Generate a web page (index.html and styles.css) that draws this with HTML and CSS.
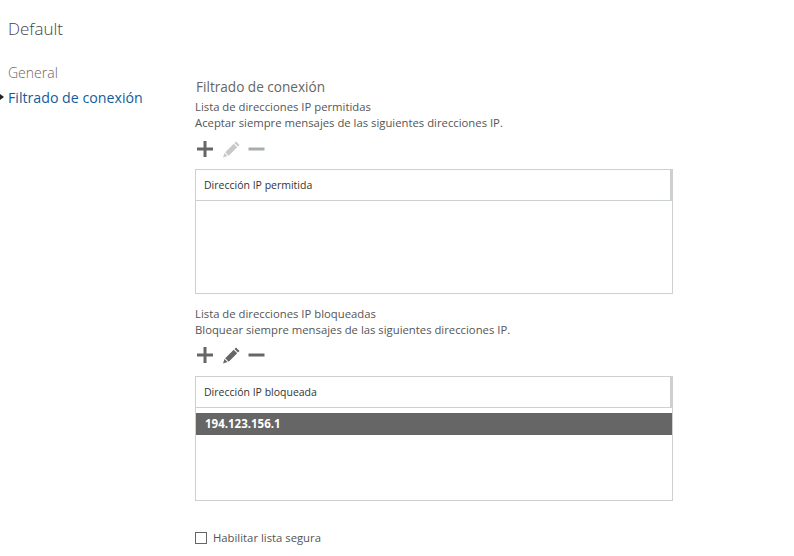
FILE: index.html
```html
<!DOCTYPE html>
<html lang="es">
<head>
<meta charset="utf-8">
<title>Default</title>
<link rel="stylesheet" href="styles.css">
</head>
<body>
<h1 class="title">Default</h1>
<div class="layout">
  <nav class="nav">
    <a class="nav-item">General</a>
    <a class="nav-item active">Filtrado de conexión</a>
  </nav>
  <main class="content">
    <h2 class="heading">Filtrado de conexión</h2>
    <section class="block">
      <p class="text">Lista de direcciones IP permitidas</p>
      <p class="text">Aceptar siempre mensajes de las siguientes direcciones IP.</p>
      <div class="toolbar">
        <svg class="icon" viewBox="0 0 16 16"><path class="dark" d="M6.500 0h3v6.500H16v3H9.500V16h-3V9.500H0v-3h6.500z"/></svg>
        <svg class="icon" viewBox="0 0 16 16"><path class="faint" d="M13 0.500 16.500 4 15 5.500 11.500 2zM10.700 2.800l3.500 3.500-8.500 8.500-3.500-3.500zM1.500 12l3 3L0 16.500z"/></svg>
        <svg class="icon" viewBox="0 0 16 16"><path class="mid" d="M0.500 6.500h16v3H0.500z"/></svg>
      </div>
      <div class="table">
        <div class="thead">Dirección IP permitida</div>
      </div>
    </section>
    <section class="block second">
      <p class="text">Lista de direcciones IP bloqueadas</p>
      <p class="text">Bloquear siempre mensajes de las siguientes direcciones IP.</p>
      <div class="toolbar">
        <svg class="icon" viewBox="0 0 16 16"><path class="dark" d="M6.500 0h3v6.500H16v3H9.500V16h-3V9.500H0v-3h6.500z"/></svg>
        <svg class="icon" viewBox="0 0 16 16"><path class="dark" d="M13 0.500 16.500 4 15 5.500 11.500 2zM10.700 2.800l3.500 3.500-8.500 8.500-3.500-3.500zM1.500 12l3 3L0 16.500z"/></svg>
        <svg class="icon" viewBox="0 0 16 16"><path class="dark" d="M0.500 6.500h16v3H0.500z"/></svg>
      </div>
      <div class="table">
        <div class="thead">Dirección IP bloqueada</div>
        <div class="row-selected">194.123.156.1</div>
      </div>
    </section>
    <label class="check"><span class="box"></span>Habilitar lista segura</label>
  </main>
</div>
</body>
</html>
```
FILE: styles.css
```css
html, body { margin: 0; padding: 0; }
body {
  width: 794px;
  height: 556px;
  overflow: hidden;
  background: #fff;
  font-family: "Open Sans", "Noto Sans", sans-serif;
  color: #555;
}
.title {
  margin: 0;
  padding: 17px 0 0 8px;
  height: 36px;
  font-size: 17px;
  line-height: 24px;
  font-weight: 300;
  color: #4a3f48;
}
.layout { display: flex; }
.nav {
  width: 195px;
  flex: none;
  padding-top: 7px;
  display: flex;
  flex-direction: column;
}
.nav-item {
  position: relative;
  padding-left: 8px;
  height: 25px;
  line-height: 25px;
  font-size: 14px;
  font-weight: 300;
  color: #666;
}
.nav-item.active {
  color: #0f5c9c;
  font-weight: 400;
  font-size: 14.200px;
}
.nav-item.active::before {
  content: "";
  position: absolute;
  left: 0;
  top: 9px;
  border-left: 4px solid #222;
  border-top: 3.500px solid transparent;
  border-bottom: 3.500px solid transparent;
}
.content { width: 478px; padding-top: 24px; }
.heading {
  margin: 0;
  padding-left: 1px;
  font-size: 13.600px;
  line-height: 20px;
  font-weight: 400;
  color: #666;
}
.text {
  margin: 0;
  font-size: 11.300px;
  line-height: 16px;
  color: #555;
}
.block { padding-top: 2px; }
.toolbar {
  display: flex;
  gap: 9.500px;
  padding: 10px 0 0 2px;
  height: 16px;
  margin-bottom: 12px;
}
.icon { width: 16px; height: 16px; flex: none; overflow: visible; }
.dark { fill: #666; }
.faint { fill: #c8c8c8; }
.mid { fill: #a5adad; }
.table {
  border: 1px solid #ccd0d0;
  box-sizing: border-box;
  height: 125px;
}
.thead {
  height: 31px;
  box-sizing: border-box;
  padding-left: 8px;
  border-bottom: 1px solid #ccd0d0;
  border-right: 2px solid #ccd0d0;
  font-size: 10.500px;
  line-height: 30px;
  color: #333;
}
.second { padding-top: 12px; }
.second .toolbar { padding-top: 9px; margin-bottom: 13px; }
.row-selected {
  margin-top: 5px;
  height: 22px;
  background: #666;
  color: #fff;
  font-size: 11.500px;
  font-weight: 700;
  line-height: 22px;
  padding-left: 9px;
}
.check {
  display: flex;
  align-items: center;
  gap: 6px;
  margin-top: 29px;
  font-size: 11.300px;
  line-height: 16px;
  color: #555;
}
.box {
  width: 10px;
  height: 10px;
  border: 1px solid #666;
  flex: none;
}
```
